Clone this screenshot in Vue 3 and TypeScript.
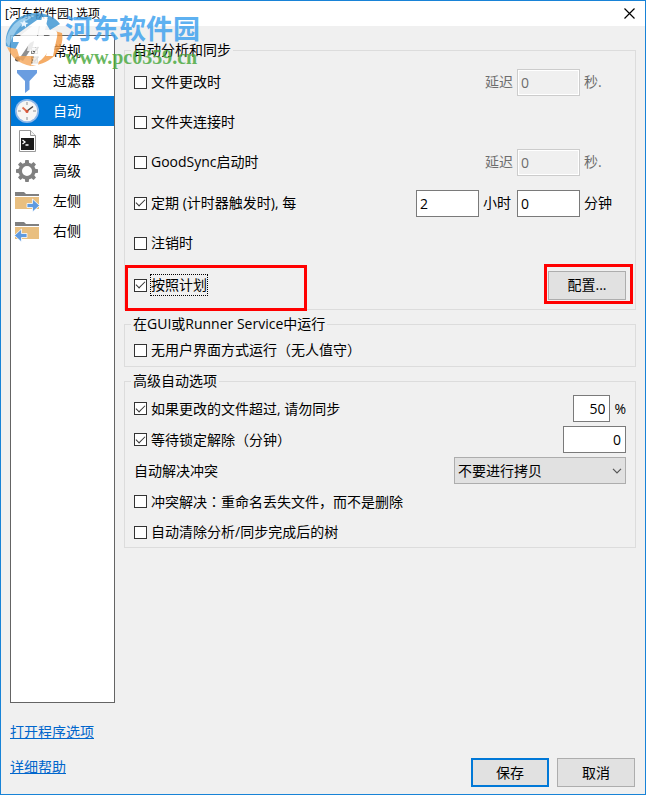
<script setup lang="ts">
import { ref } from 'vue'

type IconName = 'general' | 'filter' | 'clock' | 'script' | 'gear' | 'right' | 'left'

interface NavItem {
  label: string
  icon: IconName
}

const navItems: NavItem[] = [
  { label: '常规', icon: 'general' },
  { label: '过滤器', icon: 'filter' },
  { label: '自动', icon: 'clock' },
  { label: '脚本', icon: 'script' },
  { label: '高级', icon: 'gear' },
  { label: '左侧', icon: 'right' },
  { label: '右侧', icon: 'left' },
]

const active = ref<string>('自动')

const onChange = ref(false)
const onConnect = ref(false)
const onStart = ref(false)
const periodic = ref(true)
const onLogoff = ref(false)
const onSchedule = ref(true)
const unattended = ref(false)
const limitChanges = ref(true)
const waitLocks = ref(true)
const renameLost = ref(false)
const clearTree = ref(false)

const changeDelay = ref('0')
const startDelay = ref('0')
const hours = ref('2')
const minutes = ref('0')
const percent = ref('50')
const lockMinutes = ref('0')
const resolution = ref('不要进行拷贝')
</script>

<template>
  <div class="window">
    <header class="titlebar">
      <h1>[河东软件园] 选项</h1>
      <button class="close" type="button" aria-label="关闭">
        <svg viewBox="0 0 11 11" width="11" height="11">
          <path d="M.5 .5 10.5 10.5M10.5 .5 .5 10.5" stroke="#000" stroke-width="1.2" fill="none" />
        </svg>
      </button>
    </header>

    <main class="body">
      <nav class="sidebar">
        <button
          v-for="item in navItems"
          :key="item.label"
          type="button"
          class="nav-item"
          :class="{ selected: active === item.label }"
          @click="active = item.label"
        >
          <svg class="nav-icon" viewBox="0 0 26 26" width="26" height="26" aria-hidden="true">
            <g v-if="item.icon === 'general'">
              <path d="M5 21 16 5l4-2-1 5L9 23z" fill="#8f8f8f" />
              <circle cx="3.5" cy="21" r="2.5" fill="#5b5148" />
              <rect x="17.500" y="9.500" width="6" height="6" fill="#eee" stroke="#888" />
              <rect x="17.500" y="19" width="6" height="6" fill="#d8a46a" stroke="#555" />
              <path d="m18.500 12 2 2 4-5M18.500 21.500l2 2 4-5" stroke="#444" stroke-width="1.300" fill="none" />
            </g>
            <path v-else-if="item.icon === 'filter'" d="M3 2h20v3l-7.500 8v8.500L11 25V13L3 5z" fill="#6a9de0" />
            <g v-else-if="item.icon === 'clock'">
              <circle cx="13" cy="13" r="12" fill="#8fb8e8" />
              <circle cx="13" cy="13" r="10.300" fill="#f7f6f4" />
              <path d="M13 4v3M13 19v3M4 13h3M19 13h3" stroke="#c3c3c3" stroke-width="2" />
              <path d="m13 13 6-4.500" stroke="#444" stroke-width="1.500" />
              <path d="M8.500 9.500 13 13.500" stroke="#e06a4a" stroke-width="1.800" />
              <circle cx="13" cy="13.500" r="1.500" fill="#d8573a" />
            </g>
            <g v-else-if="item.icon === 'script'">
              <path d="M5.500 2.500h11l5 5v16h-16z" fill="#fff" stroke="#999" />
              <path d="M16.500 2.500v5h5" fill="#f2f2f2" stroke="#999" />
              <rect x="7" y="10" width="13" height="12" fill="#1a1a1a" />
              <path d="m8.500 12 2.500 2-2.500 2M11.500 17h3" stroke="#fff" stroke-width="1.300" fill="none" />
            </g>
            <g v-else-if="item.icon === 'gear'">
              <circle cx="13" cy="13" r="6.800" fill="none" stroke="#808080" stroke-width="3.600" />
              <g fill="#808080">
                <path
                  v-for="n in 8"
                  :key="n"
                  d="M10.800 5.500 11.300 2h3.400l.5 3.500z"
                  :transform="`rotate(${n * 45} 13 13)`"
                />
              </g>
            </g>
            <g v-else>
              <path d="M1 4h9l2 2h13v2H1z" fill="#808080" />
              <path d="M1 9h24v12H1z" fill="#e9bf80" />
              <path
                v-if="item.icon === 'right'"
                d="M13 15.500h5.500v-4.500l7 6.500-7 6.500v-4.500h-5.500z"
                fill="#5f9ae0"
                stroke="#fff"
                stroke-width=".8"
              />
              <path
                v-else
                d="M13 15.500H7.500v-4.500l-7 6.500 7 6.500v-4.500h5.500z"
                fill="#5f9ae0"
                stroke="#fff"
                stroke-width=".8"
              />
            </g>
          </svg>
          <span>{{ item.label }}</span>
        </button>
      </nav>

      <div class="panel">
        <fieldset>
          <legend>自动分析和同步</legend>
          <div class="rows trigger-rows">
            <div class="row">
              <label class="check"><input v-model="onChange" type="checkbox" /><span>文件更改时</span></label>
              <div class="fields muted">
                <label for="change-delay">延迟</label>
                <input id="change-delay" v-model="changeDelay" class="text" type="text" disabled />
                <span class="unit">秒.</span>
              </div>
            </div>
            <div class="row">
              <label class="check"><input v-model="onConnect" type="checkbox" /><span>文件夹连接时</span></label>
            </div>
            <div class="row">
              <label class="check"><input v-model="onStart" type="checkbox" /><span>GoodSync启动时</span></label>
              <div class="fields muted">
                <label for="start-delay">延迟</label>
                <input id="start-delay" v-model="startDelay" class="text" type="text" disabled />
                <span class="unit">秒.</span>
              </div>
            </div>
            <div class="row">
              <label class="check"><input v-model="periodic" type="checkbox" /><span>定期 (计时器触发时), 每</span></label>
              <div class="fields">
                <input id="hours" v-model="hours" class="text" type="text" />
                <label class="between" for="hours">小时</label>
                <input id="minutes" v-model="minutes" class="text" type="text" />
                <label class="unit" for="minutes">分钟</label>
              </div>
            </div>
            <div class="row">
              <label class="check"><input v-model="onLogoff" type="checkbox" /><span>注销时</span></label>
            </div>
            <div class="row marked">
              <label class="check focused"><input v-model="onSchedule" type="checkbox" /><span>按照计划</span></label>
              <button class="btn" type="button">配置...</button>
              <i class="mark mark-check"></i>
              <i class="mark mark-button"></i>
            </div>
          </div>
        </fieldset>

        <fieldset>
          <legend>在GUI或Runner Service中运行</legend>
          <div class="rows single-row">
            <div class="row">
              <label class="check"><input v-model="unattended" type="checkbox" /><span>无用户界面方式运行（无人值守）</span></label>
            </div>
          </div>
        </fieldset>

        <fieldset>
          <legend>高级自动选项</legend>
          <div class="rows option-rows">
            <div class="row">
              <label class="check"><input v-model="limitChanges" type="checkbox" /><span>如果更改的文件超过, 请勿同步</span></label>
              <div class="fields">
                <input id="percent" v-model="percent" class="text short" type="text" />
                <label for="percent">%</label>
              </div>
            </div>
            <div class="row">
              <label class="check"><input v-model="waitLocks" type="checkbox" /><span>等待锁定解除（分钟）</span></label>
              <input v-model="lockMinutes" class="text number" type="text" aria-label="分钟" />
            </div>
            <div class="row">
              <label for="resolution">自动解决冲突</label>
              <div class="select">
                <select id="resolution" v-model="resolution">
                  <option>不要进行拷贝</option>
                </select>
                <svg viewBox="0 0 10 6" width="10" height="6" aria-hidden="true">
                  <path d="m1 .8 4 4 4-4" fill="none" stroke="#555" stroke-width="1.200" />
                </svg>
              </div>
            </div>
            <div class="row">
              <label class="check"><input v-model="renameLost" type="checkbox" /><span>冲突解决<span class="mid">：</span>重命名丢失文件，而不是删除</span></label>
            </div>
            <div class="row">
              <label class="check"><input v-model="clearTree" type="checkbox" /><span>自动清除分析/同步完成后的树</span></label>
            </div>
          </div>
        </fieldset>
      </div>
    </main>

    <footer class="footer">
      <div class="links">
        <a href="#options">打开程序选项</a>
        <a href="#help">详细帮助</a>
      </div>
      <div class="actions">
        <button class="btn primary" type="button">保存</button>
        <button class="btn" type="button">取消</button>
      </div>
    </footer>

    <div class="watermark">
      <svg viewBox="0 0 58 56" width="58" height="56" aria-hidden="true">
        <path d="M1 35C-1 16 13 2 31 2c10 0 19 4 24 11L45 19 39 9 32 9 8 26v5h6l-4 8z" fill="#3b94d2" />
        <path d="M1 31C3 15 16 4 33 4 20 8 9 18 4 36z" fill="#86c3ea" />
        <path d="M57 22c3 17-11 32-33 33 10-3 17-9 20-17l5-14-3-5z" fill="#f49b45" />
        <path d="M2 36c4 10 12 17 24 19l2-10H14l-2-7z" fill="#f6a85c" />
        <path d="M11 28 30 13h4l-4 27h-8l3-15-9 6z" fill="#fff" />
        <path d="M37 6h6l-3 13h8c4 0 5 3 4 7l-4 19h-7l4-18c0-2 0-3-2-3h-4l-6 30h-6z" fill="#fff" />
        <path d="m19 9 1.500 2.500 3 .5-2.500 1.500v3L19 14.500 16.500 16l.5-3-2-2 3 .5z" fill="#e8f5ff" />
      </svg>
      <div class="watermark-text">
        <span class="site-name">河东软件园</span>
        <span class="site-url">www.pc0359.cn</span>
      </div>
    </div>
  </div>
</template>

<style>
body {
  margin: 0;
}
</style>

<style scoped>
.window {
  position: relative;
  box-sizing: border-box;
  display: flex;
  flex-direction: column;
  min-height: 100vh;
  border: 1px solid #1883d7;
  background: #f0f0f0;
  color: #000;
  font: 14px/20px 'Open Sans', 'Noto Sans CJK SC', sans-serif;
}

button,
input,
select {
  box-sizing: border-box;
  margin: 0;
  color: inherit;
  font: inherit;
}

.titlebar {
  display: flex;
  align-items: center;
  justify-content: space-between;
  height: 25px;
  padding: 0 10px 0 4px;
  background: #fff;
}

.titlebar h1 {
  margin: 0;
  font-size: 12px;
  font-weight: 400;
}

.close {
  display: flex;
  padding: 0;
  border: 0;
  background: none;
}

.body {
  flex: 1;
  display: flex;
  gap: 9px;
  padding: 9px 9px 0;
}

.sidebar {
  box-sizing: border-box;
  flex: 0 0 105px;
  display: flex;
  flex-direction: column;
  border: 1px solid #646464;
  background: #fff;
}

.nav-item {
  display: flex;
  align-items: center;
  gap: 13px;
  height: 30px;
  padding: 0 3px;
  border: 0;
  background: none;
  text-align: left;
}

.nav-item.selected {
  background: #0078d7;
  color: #fff;
}

.nav-icon {
  flex: none;
}

.panel {
  flex: 1;
  min-width: 0;
  display: flex;
  flex-direction: column;
  gap: 4px;
  padding-top: 5px;
}

fieldset {
  min-width: 0;
  margin: 0;
  padding: 0 9px;
  border: 1px solid #dcdcdc;
}

legend {
  margin-left: -3px;
  padding: 0 2px;
}

.rows {
  display: grid;
}

.trigger-rows {
  grid-template-rows: 40px 40px 40px 42px 38px 46px;
  padding: 2px 0 1px;
}

.single-row {
  grid-template-rows: 32px;
}

.option-rows {
  grid-template-rows: 31px 31px 31px 31px 30px;
  padding-top: 2px;
}

.row {
  display: flex;
  align-items: center;
  justify-content: space-between;
}

.check {
  display: flex;
  align-items: center;
  gap: 4px;
}

.check input {
  appearance: none;
  display: grid;
  place-items: center;
  width: 13px;
  height: 13px;
  border: 1px solid #333;
  background: #fff;
}

.check input:checked::before {
  content: '';
  box-sizing: border-box;
  width: 9px;
  height: 5px;
  margin-bottom: 3px;
  border: solid #333;
  border-width: 0 0 1px 1px;
  transform: rotate(-45deg);
}

.focused span {
  outline: 1px dotted #000;
}

.fields {
  display: flex;
  align-items: center;
  gap: 4px;
}

.between {
  width: 30px;
}

.unit {
  width: 42px;
}

.muted {
  color: #6d6d6d;
}

.text {
  width: 63px;
  height: 27px;
  padding: 0 3px;
  border: 1px solid #7a7a7a;
  border-radius: 0;
  background: #fff;
}

.text:disabled {
  border-color: #ccc;
  background: #f0f0f0;
  box-shadow: inset 0 0 0 1px #fff;
}

.text.short,
.text.number {
  padding-right: 4px;
  text-align: right;
}

.text.short {
  width: 37px;
}

.select {
  position: relative;
  width: 172px;
}

.select select {
  appearance: none;
  display: block;
  width: 100%;
  height: 27px;
  padding: 0 3px;
  border: 1px solid #adadad;
  border-radius: 0;
  background: #e1e1e1;
}

.select svg {
  position: absolute;
  top: 11px;
  right: 4px;
}

.btn {
  width: 78px;
  height: 29px;
  padding: 0;
  border: 1px solid #adadad;
  background: #e1e1e1;
}

.btn.primary {
  border: 2px solid #0078d7;
}

.marked {
  position: relative;
}

.mark {
  position: absolute;
  box-sizing: border-box;
  border: 3px solid #f00;
  pointer-events: none;
}

.mark-check {
  top: 3px;
  left: -9px;
  width: 182px;
  height: 46px;
}

.mark-button {
  top: 2px;
  right: -7px;
  width: 89px;
  height: 40px;
}

.footer {
  display: flex;
  align-items: flex-end;
  justify-content: space-between;
  padding: 19px 10px 7px 9px;
}

.links {
  display: flex;
  flex-direction: column;
  align-items: flex-start;
  gap: 15px;
  padding-bottom: 10px;
}

.links a {
  color: #0066cc;
  text-decoration: underline;
}

.actions {
  display: flex;
  gap: 8px;
}

.watermark {
  position: absolute;
  top: 10px;
  left: 4px;
  display: flex;
  align-items: flex-start;
  gap: 2px;
  opacity: 0.82;
  pointer-events: none;
}

.watermark-text {
  display: flex;
  flex-direction: column;
}

.site-name {
  color: #3ba0ee;
  font: 700 27px/34px 'Noto Sans CJK SC', sans-serif;
}

.site-url {
  color: #48a83c;
  font: 700 20px/24px 'Liberation Serif', serif;
}

.mid {
  font-family: 'Noto Sans CJK TC', sans-serif;
}
</style>
